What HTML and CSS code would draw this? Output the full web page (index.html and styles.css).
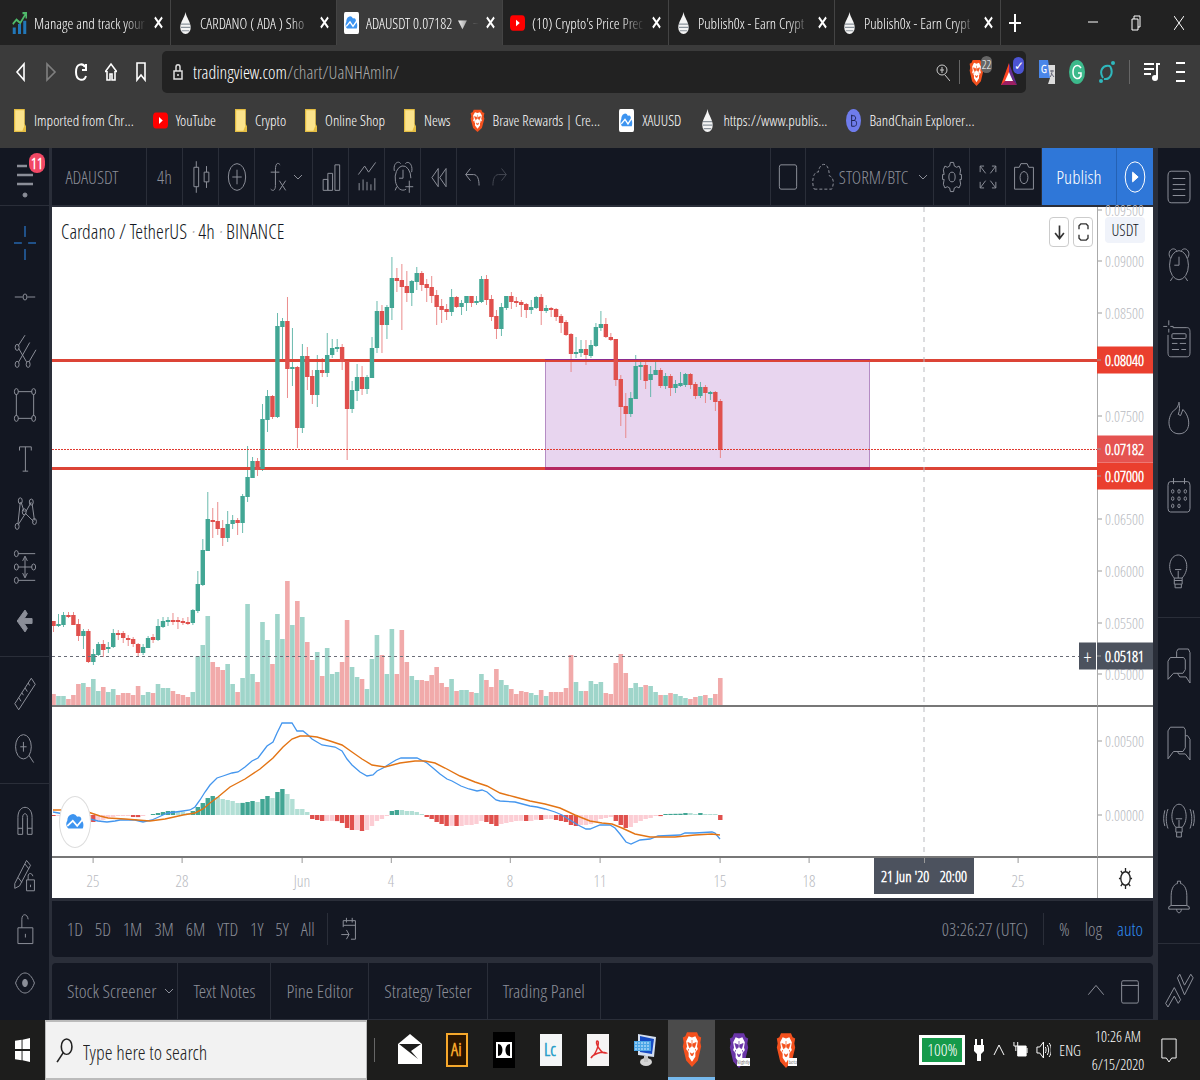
FILE: index.html
```
<!DOCTYPE html>
<html lang="en">
<head>
  <meta charset="UTF-8">
  <title>ADAUSDT 0.07182</title>
  <meta name="viewport" content="width=device-width, initial-scale=1">
  <link rel="stylesheet" href="styles.css">
</head>
<body>
  <!-- shared icons -->
  <svg class="defs" aria-hidden="true">
    <symbol id="drop" viewBox="0 0 20 20" preserveAspectRatio="none">
      <path d="M10 0C11 5 17 9 17 14a7 6 0 0 1-14 0C3 9 9 5 10 0z" fill="#f4f4f4"/>
      <path d="M4 11h12M4 14h13M5 17h10" stroke="#8a939b" stroke-width="1"/>
    </symbol>
    <symbol id="tv" viewBox="0 0 20 20" preserveAspectRatio="none">
      <rect width="20" height="20" rx="2" fill="#fff"/>
      <path d="M4 15a4 4 0 0 1-1-6 5 5 0 0 1 9-3c3-1 4 1 4 3 2 1 2 4 1 6z" fill="#3d94f0"/>
      <path d="M3 13l5-4 4 4 5-5" fill="none" stroke="#fff" stroke-width="1.5"/>
    </symbol>
    <symbol id="youtube" viewBox="0 0 20 20" preserveAspectRatio="none">
      <rect y="3" width="20" height="14" rx="4" fill="#f00"/>
      <path d="M8 7l5 3-5 3z" fill="#fff"/>
    </symbol>
    <symbol id="folder" viewBox="0 0 20 20" preserveAspectRatio="none">
      <path d="M0 0h18v13l2 2v5H0z" fill="#e4bd42"/>
      <path d="M2 1h15v14l-3 4H2z" fill="#fbe38c"/>
    </symbol>
    <symbol id="brave" viewBox="0 0 24 28" preserveAspectRatio="none">
      <path d="M6 1h12l2 3 3 1-1 4 1 3-4 11-7 5-7-5L1 12l1-3-1-4 3-1z" fill="var(--shield, #f4511e)"/>
      <path d="M12 5l4-1 3 4-1 4 1 2-3 3 0 3-4 4-4-4 0-3-3-3 1-2-1-4 3-4z" fill="#fff"/>
      <path d="M7 9l4 1 0 2-2 1zM17 9l-4 1 0 2 2 1zM10 17l2 1 2-1-1 2h-2zM8 14l-1 2M16 14l1 2M12 7v5" fill="var(--shield, #f4511e)" stroke="var(--shield, #f4511e)" stroke-width="0.7"/>
    </symbol>
  </svg>

  <div class="tabs">
    <a class="tab" href="#">
      <svg class="favicon" viewBox="0 0 20 20" preserveAspectRatio="none"><path d="M1 14h4v6H1zM8 11h4v9H8zM15 8h4v12h-4z" fill="#2277b8"/><path d="M1 11l5-4 5 3 7-8M14 1h5v5" fill="none" stroke="#4fb96a" stroke-width="2"/></svg>
      <span class="tab-title">Manage and track your</span><svg class="close" viewBox="0 0 10 10" preserveAspectRatio="none"><path d="M1 1l8 8M9 1L1 9"/></svg>
    </a>
    <a class="tab" href="#">
      <svg class="favicon"><use href="#drop"/></svg>
      <span class="tab-title">CARDANO ( ADA ) Sho</span><svg class="close" viewBox="0 0 10 10" preserveAspectRatio="none"><path d="M1 1l8 8M9 1L1 9"/></svg>
    </a>
    <a class="tab active" href="#">
      <svg class="favicon"><use href="#tv"/></svg>
      <span class="tab-title">ADAUSDT 0.07182 ▼ −</span><svg class="close" viewBox="0 0 10 10" preserveAspectRatio="none"><path d="M1 1l8 8M9 1L1 9"/></svg>
    </a>
    <a class="tab" href="#">
      <svg class="favicon"><use href="#youtube"/></svg>
      <span class="tab-title">(10) Crypto's Price Prec</span><svg class="close" viewBox="0 0 10 10" preserveAspectRatio="none"><path d="M1 1l8 8M9 1L1 9"/></svg>
    </a>
    <a class="tab" href="#">
      <svg class="favicon"><use href="#drop"/></svg>
      <span class="tab-title">Publish0x - Earn Crypt</span><svg class="close" viewBox="0 0 10 10" preserveAspectRatio="none"><path d="M1 1l8 8M9 1L1 9"/></svg>
    </a>
    <a class="tab" href="#">
      <svg class="favicon"><use href="#drop"/></svg>
      <span class="tab-title">Publish0x - Earn Crypt</span><svg class="close" viewBox="0 0 10 10" preserveAspectRatio="none"><path d="M1 1l8 8M9 1L1 9"/></svg>
    </a>
    <button class="new-tab" aria-label="New tab"><svg viewBox="0 0 12 20" preserveAspectRatio="none"><path d="M6 0v20M0 10h12" stroke="#fff" stroke-width="2"/></svg></button>
    <div class="window-controls">
      <button aria-label="Minimize"><svg viewBox="0 0 10 16"><path d="M0 7h10"/></svg></button>
      <button aria-label="Restore"><svg viewBox="0 0 10 16"><path d="M1 4h6v11H1zM3 4V1h6v11H7"/></svg></button>
      <button aria-label="Close"><svg viewBox="0 0 10 16"><path d="M0 1l10 14M10 1L0 15"/></svg></button>
    </div>
  </div>

  <div class="nav">
    <button aria-label="Back"><svg viewBox="0 0 12 20"><path d="M9 2v16L2 10z"/></svg></button>
    <button class="dim" aria-label="Forward"><svg viewBox="0 0 12 20"><path d="M2 2v16l8-8z"/></svg></button>
    <button aria-label="Reload"><svg viewBox="0 0 12 20"><path d="M10 5C8 1 1 1 1 10c0 9 8 10 10 4M11 2v6H7" stroke-width="2"/></svg></button>
    <button aria-label="Home"><svg viewBox="0 0 12 20"><path d="M0 10l6-8 6 8M2 9v9h3v-6h2v6h3V9"/></svg></button>
    <button aria-label="Bookmark"><svg viewBox="0 0 12 20"><path d="M2 1h8v17l-4-5-4 5z"/></svg></button>
    <div class="address">
      <svg viewBox="0 0 10 16"><path d="M1 7h8v8H1zM3 7V3c0-3 4-3 4 0v4M5 10v2"/></svg>
      <span class="host">tradingview.com</span><span class="path">/chart/UaNHAmIn/</span>
      <span class="address-icons">
        <svg class="zoom" viewBox="0 0 14 22"><circle cx="6" cy="9" r="5"/><path d="M9 14l5 6M6 6v6M4 9h4"/></svg>
        <i class="bar"></i>
        <span class="badged"><svg class="ext-brave"><use href="#brave"/></svg><b class="count">22</b></span>
        <span class="badged"><svg class="bat" viewBox="0 0 16 22" preserveAspectRatio="none"><path d="M8 0L0 22h4l4-11z" fill="#ff4724"/><path d="M0 22h16l-4-5H5z" fill="#9e1f63"/><path d="M8 0l8 22-4-5-4-7z" fill="#662d91"/><path d="M8 9l-4 9h8z" fill="#fff"/></svg><b class="count check">✓</b></span>
      </span>
    </div>
    <div class="extensions">
      <svg viewBox="0 0 16 24"><path d="M0 0h9l3 18H0z" fill="#4a86e8"/><path d="M9 5h7v19H9l2-6z" fill="#dcdcdc"/><path d="M11 11h4M13 10c0 4-1 6-2 7M12 13l3 4" stroke="#667" fill="none"/><text x="2" y="13" fill="#fff" font-size="11" font-weight="bold">G</text></svg>
      <svg viewBox="0 0 16 24" preserveAspectRatio="none"><ellipse cx="8" cy="12" rx="8" ry="12" fill="#3cb98b"/><path d="M12 8C9 3 4 6 4 12s5 9 8 4v-3H9" fill="none" stroke="#fff" stroke-width="1.5"/></svg>
      <svg viewBox="0 0 16 24"><g fill="none" stroke="#2fb8bd" stroke-width="2"><path d="M4 18C0 12 3 4 11 6M5 19c6 1 10-6 6-13"/></g><circle cx="14" cy="3" r="2" fill="#2fb8bd"/><circle cx="2" cy="21" r="2" fill="#2fb8bd"/></svg>
      <i class="bar"></i>
      <svg viewBox="0 0 16 20"><path d="M0 2h10M0 7h10M0 12h7M13 16V2h3" fill="none" stroke="#fff" stroke-width="2"/><ellipse cx="11" cy="16" rx="3" ry="3" fill="#fff"/></svg>
      <svg viewBox="0 0 16 20"><path d="M2 1h9M2 10h9M2 19h9" stroke="#fff" stroke-width="2"/></svg>
    </div>
  </div>

  <div class="bookmarks">
    <a href="#"><svg class="folder"><use href="#folder"/></svg>Imported from Chr...</a>
    <a href="#"><svg><use href="#youtube"/></svg>YouTube</a>
    <a href="#"><svg class="folder"><use href="#folder"/></svg>Crypto</a>
    <a href="#"><svg class="folder"><use href="#folder"/></svg>Online Shop</a>
    <a href="#"><svg class="folder"><use href="#folder"/></svg>News</a>
    <a href="#"><svg><use href="#brave"/></svg>Brave Rewards | Cre...</a>
    <a href="#"><svg><use href="#tv"/></svg>XAUUSD</a>
    <a href="#"><svg><use href="#drop"/></svg>https://www.publis...</a>
    <a href="#"><svg viewBox="0 0 16 24" preserveAspectRatio="none"><ellipse cx="8" cy="12" rx="8" ry="12" fill="#6f7cec"/><path d="M6 6v12h3c3 0 3-6 0-6H6M6 7h2c3 0 3 5 0 5" fill="none" stroke="#1c2150"/></svg>BandChain Explorer...</a>
  </div>

  <main class="workspace">
    <aside class="draw-tools">
      <button class="menu" aria-label="Menu"><svg viewBox="0 0 18 34"><path d="M1 2h10M1 11h16M1 20h16" stroke-width="2.5"/><circle cx="9" cy="31" r="2" fill="currentColor"/></svg><b>11</b></button>
      <div class="tool-group">
        <button class="on" aria-label="Cross"><svg class="ico" viewBox="0 0 28 28" preserveAspectRatio="none"><path d="M14 0v9M14 19v9M0 14h10M18 14h10"/></svg></button>
        <button aria-label="Trend line"><svg class="ico" viewBox="0 0 28 28" preserveAspectRatio="none"><path d="M1 14h10M17 14h10"/><circle cx="14" cy="14" r="2.5"/></svg></button>
        <button aria-label="Pitchfork"><svg class="ico" viewBox="0 0 28 28" preserveAspectRatio="none"><path d="M5 10l9-9M6 12l10 11M6 23L20 7M19 23l9-10"/><circle cx="4" cy="11" r="2.5"/><circle cx="4" cy="25" r="2.5"/><circle cx="18" cy="25" r="2.5"/></svg></button>
        <button aria-label="Rectangle"><svg class="ico" viewBox="0 0 28 28" preserveAspectRatio="none"><path d="M5 3h18M5 25h18M3 5v18M25 5v18"/><circle cx="3" cy="3" r="2.5"/><circle cx="25" cy="3" r="2.5"/><circle cx="3" cy="25" r="2.5"/><circle cx="25" cy="25" r="2.5"/></svg></button>
        <button aria-label="Text"><svg class="ico" viewBox="0 0 28 28" preserveAspectRatio="none"><path d="M7 7V4h15v3M14.500 4v20M11 24h7"/></svg></button>
        <button aria-label="Pattern"><svg class="ico" viewBox="0 0 28 28" preserveAspectRatio="none"><path d="M5 23L8 5M9 5l4 8M15 13l7-8M23 6l3 14M5 24l9-9M14 14l11 7"/><circle cx="4" cy="25" r="2.500"/><circle cx="8" cy="4" r="2.500"/><circle cx="13" cy="13" r="2.500"/><circle cx="22" cy="5" r="2.500"/><circle cx="26" cy="21" r="2.500"/></svg></button>
        <button aria-label="Forecast"><svg class="ico" viewBox="0 0 28 28" preserveAspectRatio="none"><path d="M5 3h22M5 14h18M5 25h22M14 6v16M11 9l3-4 3 4M11 19l3 4 3-4"/><circle cx="3" cy="3" r="2.500"/><circle cx="3" cy="14" r="2.500"/><circle cx="25" cy="14" r="2.500"/><circle cx="3" cy="25" r="2.500"/></svg></button>
        <button aria-label="Arrow"><svg class="ico" viewBox="0 0 28 28" preserveAspectRatio="none"><path d="M4 14l10-9 3 3-4 4h10v4H13l4 4-3 3z" fill="currentColor"/></svg></button>
      </div>
      <div class="tool-group">
        <button aria-label="Measure"><svg class="ico" viewBox="0 0 28 28" preserveAspectRatio="none"><path d="M1 22L22 1l5 5L6 27zM6 17l3 3M10 13l2 2M14 9l3 3M18 5l2 2"/></svg></button>
        <button aria-label="Zoom in"><svg class="ico" viewBox="0 0 28 28" preserveAspectRatio="none"><circle cx="12" cy="13" r="10"/><path d="M19 20l6 6M12 9v8M8 13h8"/></svg></button>
      </div>
      <div class="tool-group">
        <button aria-label="Magnet"><svg class="ico" viewBox="0 0 28 28" preserveAspectRatio="none"><path d="M5 25V11c0-11 18-11 18 0v14h-6V11c0-4-6-4-6 0v14zM5 20h6M17 20h6"/></svg></button>
        <button aria-label="Drawing mode"><svg class="ico" viewBox="0 0 28 28" preserveAspectRatio="none"><path d="M1 21L16 2l5 4L7 23l-6 2zM5 16l5 4M14 5l5 4M16 18h10v9H16zM18 18v-3c0-3 5-3 6 0M21 22v2"/></svg></button>
        <button aria-label="Lock drawings"><svg class="ico" viewBox="0 0 28 28" preserveAspectRatio="none"><path d="M5 13h19v13H5zM10 13V6c0-5 7-5 8 0M14.500 18v3"/></svg></button>
        <button aria-label="Hide drawings"><svg class="ico" viewBox="0 0 28 28" preserveAspectRatio="none"><path d="M2 14c6-11 18-11 24 0-6 11-18 11-24 0z"/><circle cx="14" cy="14" r="3" fill="currentColor"/></svg></button>
      </div>
    </aside>

    <section class="center">
      <header class="top-bar">
        <button class="symbol">ADAUSDT</button>
        <button>4h</button>
        <button aria-label="Candles"><svg class="ico" viewBox="0 0 28 28" preserveAspectRatio="none"><path d="M5 6h6v16H5zM8 1v5M8 22v5M18 10h6v8h-6zM21 5v5M21 18v5"/></svg></button>
        <button aria-label="Compare"><svg class="ico" viewBox="0 0 28 28" preserveAspectRatio="none"><circle cx="14" cy="14" r="11"/><path d="M14 8v12M8 14h12"/></svg></button>
        <button class="wide" aria-label="Indicators"><svg class="ico" viewBox="0 0 28 28" preserveAspectRatio="none"><path d="M18 4c-4-3-6 0-6 4v13c0 4-3 5-6 3M6 10h11M17 17l8 8M25 17l-8 8"/></svg><svg class="chev" viewBox="0 0 8 6"><path d="M0 1l4 4 4-4"/></svg></button>
        <button aria-label="Financials"><svg class="ico" viewBox="0 0 28 28" preserveAspectRatio="none"><path d="M4 16h6v9H4zM10 11h6v14h-6zM19 4h6v21h-6z"/></svg></button>
        <button aria-label="Templates"><svg class="ico" viewBox="0 0 28 28" preserveAspectRatio="none"><path d="M3 12l8-7 5 5 9-8M4 19v6M9 16v9M14 18v7M19 20v5M24 15v10"/></svg></button>
        <button aria-label="Alert"><svg class="ico" viewBox="0 0 28 28" preserveAspectRatio="none"><path d="M18 24A10 10 0 1 1 24 15M14 8v7H9M3 9c-2-6 5-9 8-6M17 3c4-3 10 1 8 7M6 22l-2 3M22 17v10M17 22h10"/></svg></button>
        <button aria-label="Replay"><svg class="ico" viewBox="0 0 28 28" preserveAspectRatio="none"><path d="M13 7v15l-8-7.500zM23 7v15l-8-7.500z"/></svg></button>
        <button class="wide" aria-label="Undo"><svg class="ico" viewBox="0 0 28 28" preserveAspectRatio="none"><path d="M12 7l-6 5 6 5M6 12h10c5 0 7 4 7 9"/></svg><svg class="ico faint" viewBox="0 0 28 28" preserveAspectRatio="none"><path d="M16 7l6 5-6 5M22 12H12c-5 0-7 4-7 9"/></svg></button>
        <span class="spacer"></span>
        <button aria-label="Layout"><svg class="ico" viewBox="0 0 28 28" preserveAspectRatio="none"><rect x="3" y="4" width="22" height="20" rx="2"/></svg></button>
        <button class="layout-name"><svg class="ico" viewBox="0 0 28 28" preserveAspectRatio="none"><path d="M3 24h22c4-5 2-10-3-11 0-12-12-12-14-3-7-1-9 10-5 14z" stroke-dasharray="3 2"/></svg>STORM/BTC<svg class="chev" viewBox="0 0 8 6"><path d="M0 1l4 4 4-4"/></svg></button>
        <button aria-label="Settings"><svg class="ico" viewBox="0 0 28 28" preserveAspectRatio="none"><path d="M12 2h4l1 3 3 1 3-1 2 3-1 4h2v4h-2l1 4-2 3-3-1-3 1-1 3h-4l-1-3-3-1-3 1-2-3 1-4H2v-4h2L3 8l2-3 3 1 3-1z"/><circle cx="14" cy="14" r="4"/></svg></button>
        <button aria-label="Fullscreen"><svg class="ico" viewBox="0 0 28 28" preserveAspectRatio="none"><path d="M4 10V5h5M4 5l7 6M19 5h5v5M24 5l-7 6M4 18v5h5M4 23l7-6M24 18v5h-5M24 23l-7-6"/></svg></button>
        <button aria-label="Snapshot"><svg class="ico" viewBox="0 0 28 28" preserveAspectRatio="none"><path d="M2 6h6l2-3h8l2 3h6v18H2z"/><circle cx="14" cy="14.500" r="5"/></svg></button>
        <button class="publish">Publish</button>
        <button class="publish play" aria-label="Stream"><svg class="ico" viewBox="0 0 28 28" preserveAspectRatio="none"><circle cx="14" cy="14" r="12.500"/><path d="M11 10l7 4-7 4z" fill="currentColor"/></svg></button>
      </header>

      <div class="chart">
        <div class="pane">
          <svg id="pricePlot" class="plot" viewBox="52 207 1045 498" preserveAspectRatio="none"></svg>
          <h1>Cardano / TetherUS <i>·</i> 4h <i>·</i> BINANCE</h1>
          <div class="pane-buttons">
            <button aria-label="Move down"><svg viewBox="0 0 10 16"><path d="M5 2v12M1 9l4 5 4-5"/></svg></button>
            <button aria-label="Maximize"><svg viewBox="0 0 12 20"><path d="M1 7V3l2-2h6l2 2v4M1 13v4l2 2h6l2-2v-4"/></svg></button>
          </div>
        </div>
        <div class="axis" id="priceAxis"><span class="currency">USDT</span></div>
        <div class="pane">
          <svg id="macdPlot" class="plot" viewBox="52 707 1045 149" preserveAspectRatio="none"></svg>
          <a class="logo" href="#" aria-label="TradingView"><svg><use href="#tv"/></svg></a>
        </div>
        <div class="axis" id="macdAxis"></div>
        <div class="time-axis" id="timeAxis"></div>
        <button class="axis-settings" aria-label="Axis settings"><svg viewBox="0 0 16 24" preserveAspectRatio="none"><ellipse cx="8" cy="12" rx="5" ry="7"/><path d="M8 1v4M8 19v4M1 12h2M13 12h2M3 4l2 3M11 17l2 3M13 4l-2 3M5 17l-2 3"/></svg></button>
      </div>

      <div class="ranges">
        <button>1D</button><button>5D</button><button>1M</button><button>3M</button><button>6M</button><button>YTD</button><button>1Y</button><button>5Y</button><button>All</button>
        <i class="sep"></i>
        <button aria-label="Go to date"><svg class="ico small" viewBox="0 0 28 28" preserveAspectRatio="none"><path d="M5 12V5h19v20h-7M5 10h19M10 2v5M19 2v5M2 20h12M10 15l4 5-4 5"/></svg></button>
        <span class="spacer"></span>
        <div class="scale">
          <span class="clock">03:26:27 (UTC)</span>
          <i class="sep"></i>
          <button>%</button><button>log</button><button class="on">auto</button>
        </div>
      </div>

      <footer class="panels">
        <button class="screener">Stock Screener<svg class="chev" viewBox="0 0 8 6"><path d="M0 1l4 4 4-4"/></svg></button>
        <button>Text Notes</button>
        <button>Pine Editor</button>
        <button>Strategy Tester</button>
        <button>Trading Panel</button>
        <span class="spacer"></span>
        <button class="plain" aria-label="Open panel"><svg class="ico small" viewBox="0 0 28 28" preserveAspectRatio="none"><path d="M2 18L14 8l12 10"/></svg></button>
        <button class="plain" aria-label="Maximize panel"><svg class="ico small" viewBox="0 0 28 28" preserveAspectRatio="none"><rect x="1" y="3" width="26" height="24" rx="2"/><path d="M1 8h26"/></svg></button>
      </footer>
    </section>

    <aside class="widgets">
      <div class="widget-group">
        <button aria-label="Watchlist"><svg class="ico" viewBox="0 0 28 28" preserveAspectRatio="none"><rect x="0" y="1" width="28" height="26" rx="4"/><path d="M6 7h16M6 12h16M6 16h16M6 21h16"/></svg></button>
        <button aria-label="Alerts"><svg class="ico" viewBox="0 0 28 28" preserveAspectRatio="none"><circle cx="14" cy="15" r="12"/><path d="M14 8v7H8M3 9c-5-5 3-10 8-6M25 9c5-5-3-10-8-6M6 25l-3 3M22 25l3 3"/></svg></button>
        <button aria-label="Data window"><svg class="ico" viewBox="0 0 28 28" preserveAspectRatio="none"><path d="M6 3h18c3 0 4 1 4 4v16c0 3-1 4-4 4H4c-3 0-4-1-4-4V9M1-3v4M1 4v3M-6 2h5M3 2h4"/><rect x="5" y="8" width="18" height="4" rx="1"/><path d="M5 16h7M15 16h8M5 21h9M17 21h6"/></svg></button>
        <button aria-label="Hotlists"><svg class="ico" viewBox="0 0 28 28" preserveAspectRatio="none"><path d="M14 1c1 4 1 7-1 10l3 1 3-5c11 7 10 20-5 20S-2 14 7 8c5-2 6-4 7-7z"/></svg></button>
        <button aria-label="Calendar"><svg class="ico" viewBox="0 0 28 28" preserveAspectRatio="none"><rect x="0" y="3" width="28" height="25" rx="3"/><path d="M7 0v5M21 0v5"/><circle cx="6" cy="11" r="1.500"/><circle cx="14" cy="11" r="1.500"/><circle cx="22" cy="11" r="1.500"/><circle cx="6" cy="17" r="1.500"/><circle cx="14" cy="17" r="1.500"/><circle cx="22" cy="17" r="1.500"/><circle cx="6" cy="23" r="1.500"/><circle cx="14" cy="23" r="1.500"/></svg></button>
        <button aria-label="Ideas"><svg class="ico" viewBox="0 0 28 28" preserveAspectRatio="none"><path d="M8 19c-11-8-5-19 5-19s16 11 5 19zM8 19v5h10v-5M9 24v3h8v-3M13 19v-6M9 12h8M8 21h10"/></svg></button>
      </div>
      <div class="widget-group">
        <button aria-label="Public chats"><svg class="ico" viewBox="0 0 28 28" preserveAspectRatio="none"><path d="M11 7V2l2-2h13l2 3v25l-5-5h-8l-3-3M0 10l3-3h17l2 2v8l-3 3H7l-7 5z"/></svg></button>
        <button aria-label="Private chats"><svg class="ico" viewBox="0 0 28 28" preserveAspectRatio="none"><path d="M0 4l3-3h17l2 2v15l-3 3H7l-7 6zM22 8h3l3 3v17l-6-5h-8l-2-2"/></svg></button>
        <button aria-label="Ideas stream"><svg class="ico" viewBox="0 0 28 28" preserveAspectRatio="none"><path d="M10 20C1 14 5 1 14 1s13 13 4 19zM10 20v4h8v-4M11 24v4h6v-4M14 20v-6M10 13h8M0 5c-3 5-3 11 0 16M-4 6c-2 5-2 9 0 13M28 5c3 5 3 11 0 16M32 6c2 5 2 9 0 13"/></svg></button>
        <button aria-label="Notifications"><svg class="ico" viewBox="0 0 28 28" preserveAspectRatio="none"><path d="M4 21v-8c0-7 5-10 8-10V1h4v2c3 0 8 3 8 10v8l3 1v2H1v-2zM4 21h20M11 24c0 4 6 4 6 0"/></svg></button>
      </div>
      <div class="widget-group last">
        <button aria-label="Order panel"><svg class="ico" viewBox="0 0 28 28" preserveAspectRatio="none"><path d="M-3 25l11-13 8 10-3 3-5-6-8 9zM12 4l3-3 6 9 8-9 3 3-11 14z"/></svg></button>
      </div>
    </aside>
  </main>

  <div class="taskbar">
    <button class="start" aria-label="Start"><svg viewBox="0 0 16 26" preserveAspectRatio="none"><path d="M0 3l7-1v10H0zM8 2l8-2v12H8zM0 14h7v10l-7-1zM8 14h8v12l-8-2z" fill="#fff"/></svg></button>
    <label class="search"><svg viewBox="0 0 16 26" preserveAspectRatio="none"><ellipse cx="10" cy="9" rx="5" ry="8"/><path d="M7 15L1 25"/></svg><input type="text" placeholder="Type here to search"></label>
    <i class="bar"></i>
    <div class="apps">
      <button aria-label="Mail"><svg viewBox="0 0 24 36" preserveAspectRatio="none"><path d="M0 12L12 2l12 10v20H0z" fill="#fff"/><path d="M1 12h22L13 19l7 8L1 12z" fill="#1d1d1c"/></svg></button>
      <button aria-label="Illustrator"><svg viewBox="0 0 24 36"><rect x="2" y="2" width="20" height="32" fill="#2a1500" stroke="#f7a82b" stroke-width="2"/><text x="6" y="24" font-size="18" font-weight="bold" fill="#f7a82b">Ai</text></svg></button>
      <button aria-label="Dolby"><svg viewBox="0 0 24 36"><path d="M1 0h22v36H1z" fill="#000"/><path d="M4 10h16v16H4z" fill="#fff"/><path d="M6 12c6 0 6 12 0 12zM18 12c-6 0-6 12 0 12z"/></svg></button>
      <button aria-label="LiveCycle"><svg viewBox="0 0 24 36"><path d="M1 2h22v32H1z" fill="#f4f6f7"/><text x="5" y="24" font-size="18" font-weight="bold" fill="#2d9fc9">Lc</text></svg></button>
      <button aria-label="Acrobat"><svg viewBox="0 0 24 36"><path d="M1 2h22v32H1z" fill="#f6f4f4"/><path d="M5 26c7-6 9-18 6-17-2 2 4 13 9 12-4-2-13 1-15 5z" fill="none" stroke="#e02f2f" stroke-width="1.500"/></svg></button>
      <button aria-label="Remote desktop"><svg viewBox="0 0 24 36"><path d="M5 2l18 3-2 20-16-2z" fill="#d4dff0"/><path d="M7 4l14 3-2 15-12-2z" fill="#164bc4"/><path d="M1 9h17v10H1z" fill="#4aa5e6"/><path d="M2 11h15M2 14h15M2 17h15" stroke="#d7efff" stroke-dasharray="2 1"/><ellipse cx="13" cy="30" rx="6" ry="4" fill="#d5d5d5"/><path d="M11 24h4v6h-4z" fill="#c4c4c4"/></svg></button>
      <button class="running" aria-label="Brave"><svg><use href="#brave"/></svg></button>
      <button class="nightly" aria-label="Brave Nightly"><svg><use href="#brave"/></svg><small>Nightly</small></button>
      <button aria-label="Brave Beta"><svg><use href="#brave"/></svg><small>beta</small></button>
    </div>
    <span class="spacer"></span>
    <div class="tray">
      <span class="battery">100%</span>
      <svg viewBox="0 0 12 24"><path d="M3 1v6M9 1v6" stroke-width="2"/><path d="M1 7h10v6l-3 3v7H4v-7l-3-3z" fill="#fff" stroke="none"/></svg>
      <svg viewBox="0 0 12 24"><path d="M1 17L6 7l5 10"/></svg>
      <svg class="power" viewBox="0 0 16 24" preserveAspectRatio="none"><path d="M5 8h9v10H5z" fill="#fff"/><path d="M1 4v4h4V4M3 8v5M15 10v5"/></svg>
      <svg class="power" viewBox="0 0 16 24" preserveAspectRatio="none"><path d="M1 9h3l4-5v16l-4-5H1zM10 9c1 2 1 4 0 6M12 7c2 3 2 7 0 10M14 5c3 4 3 10 0 14"/></svg>
      <span>ENG</span>
      <time>10:26 AM<br>6/15/2020</time>
      <svg class="note" viewBox="0 0 18 28" preserveAspectRatio="none"><path d="M1 3h16v19h-5l-3 4-3-4H1z"/></svg>
    </div>
  </div>

  <script src="chart.js"></script>
</body>
</html>
```
FILE: chart.js
```
// [up, bodyTop, bodyBottom, high, low, volumeTop]
const bars = [
  [0,621,626,621,632,694],[1,624,626,614,627,696],[1,615,625,612,627,696],[0,615,616,612,618,699],[0,615,625,612,625,695],
  [0,624,636,619,641,684],[1,631,636,629,649,683],[0,631,662,629,663,687],[1,654,662,649,665,679],[1,644,655,642,656,691],
  [0,644,650,640,657,687],[1,647,649,642,653,692],[1,633,647,629,648,689],[0,633,635,630,640,695],[0,633,638,631,643,693],
  [0,638,640,635,646,693],[0,639,644,637,647,695],[0,644,653,643,656,686],[1,647,653,644,655,695],[1,638,648,636,648,692],
  [0,637,640,634,643,693],[1,626,640,619,641,684],[1,621,627,617,628,688],[1,620,622,617,626,688],[0,620,621,613,625,691],
  [0,620,622,617,629,694],[0,621,623,618,625,695],[0,622,623,617,625,697],[1,610,623,609,625,692],[1,584,611,571,613,656],
  [1,550,585,539,586,645],[1,519,551,492,551,616],[0,520,522,508,538,662],[0,521,529,502,535,667],[0,528,538,520,546,670],
  [1,524,538,511,542,664],[1,520,524,515,529,684],[0,520,523,518,535,692],[1,496,523,494,533,678],[1,477,497,446,502,604],
  [1,461,478,457,478,674],[0,461,470,458,476,682],[1,419,469,404,471,622],[1,396,420,390,432,640],[0,396,417,395,419,664],
  [1,326,417,313,418,614],[1,321,327,318,359,639],[0,321,369,297,398,581],[1,367,369,328,386,625],[0,367,428,366,448,601],
  [1,356,428,344,433,617],[0,356,377,347,390,642],[0,376,395,370,404,660],[1,370,395,355,407,652],[0,370,373,358,377,676],
  [1,355,373,333,377,648],[1,348,355,339,358,674],[1,347,349,339,352,672],[0,347,362,344,370,662],[0,361,409,360,460,620],
  [1,390,409,381,413,667],[1,377,391,364,401,677],[0,377,389,366,395,679],[1,377,389,375,394,689],[1,348,378,337,378,659],
  [1,311,348,301,353,635],[0,311,325,305,353,655],[1,307,325,305,339,674],[1,278,308,257,320,629],[0,278,281,268,292,674],
  [0,280,287,264,330,630],[0,286,293,271,302,662],[1,281,293,280,306,676],[1,273,282,267,290,680],[0,273,285,271,291,680],
  [0,284,288,279,302,681],[0,287,296,276,303,675],[0,295,307,290,325,667],[0,306,310,299,323,683],[0,309,312,304,320,687],
  [1,297,312,289,316,679],[0,297,307,296,308,691],[1,303,307,300,315,690],[1,296,303,296,311,690],[0,296,303,296,307,692],
  [1,301,303,296,305,693],[1,279,302,276,303,674],[0,279,300,275,305,680],[0,299,317,295,321,687],[0,316,329,310,339,669],
  [1,307,329,303,336,680],[1,296,308,296,310,685],[0,296,302,292,309,689],[0,301,303,297,307,694],[0,302,305,300,317,691],
  [0,304,310,303,318,692],[1,307,310,300,314,693],[1,297,308,296,309,695],[0,297,311,294,325,690],[1,308,311,305,313,696],
  [0,308,310,307,317,692],[0,309,317,308,321,692],[0,316,323,314,333,692],[0,322,335,320,336,688],[0,334,354,333,372,655],
  [1,352,354,337,358,682],[1,349,353,340,357,691],[0,349,355,340,365,691],[1,345,356,340,358,681],[1,327,346,323,347,684],
  [1,324,328,311,331,682],[0,324,337,318,338,693],[0,337,340,333,341,694],[0,339,380,339,386,663],[0,379,407,375,426,654],
  [0,406,414,393,438,673],[1,398,414,392,417,688],[1,366,399,355,399,683],[1,365,367,360,380,687],[0,365,381,361,389,685],
  [1,374,380,366,397,686],[1,370,375,361,375,692],[0,370,386,368,388,695],[1,376,386,373,389,695],[0,376,388,374,396,693],
  [1,384,388,380,393,694],[1,383,386,372,387,696],[1,374,385,373,387,698],[0,374,385,373,389,699],[0,384,396,382,399,697],
  [1,387,396,382,398,696],[0,387,393,385,403,695],[1,392,393,391,400,698],[0,392,402,391,411,694],[0,401,450,399,458,678]
];

// MACD histogram, positive above the zero line
const hist = [
  -1,-1,-1,-2,-3,-4,-5,-6,-7,-6,-5,-3,-2,-1,-1,-1,-2,-2.1,-1,0,
  1,2,3,4,4.1,3,3,2,4,8,12,17,19,18,16,15,14,12,12.1,13,
  14,13,16,19,17,23,26,21,16,6,6,3,-4,-5,-6,-6,-5.9,-6.1,-8,-13,
  -15,-15,-16,-15,-11,-6,-4,-1,4,5,5,4,4,3,1,-2,-4,-7,-9,-11,
  -10.8,-11,-11,-10,-10,-9,-6,-7,-9,-11,-9,-8,-7,-6,-5.8,-6,-6,-4.8,-5,-4,
  -4,-5,-6,-7,-10,-11,-10,-10,-9,-7,-4,-3,-2,-6,-10,-13,-12,-8,-6,-4,
  -3,-1,-1.1,1,1.1,1.2,1.3,2,2,1,2,1,1,1,-5
];

const macdLine = "53,812 75,816 90,819 98,821 107,822 115,821 120,820 135,820 143,822 152,820 163,815 168,813 183,811 190,810 195,807 200,800 205,792 210,785 217,778 223,776 232,773 238,772 245,767 252,761 258,758 267,746 273,742 277,733 282,723 292,723 297,731 303,731 308,735 312,739 322,745 335,747 342,751 347,759 352,765 360,772 367,776 373,775 377,771 383,768 391,763 396,760 401,758 417,758 427,763 433,768 440,774 447,779 452,781 461,786 469,789 477,791 482,790 487,792 496,800 500,801 515,802 530,806 537,807 545,809 555,812 562,815 570,820 578,825 586,829 590,829 600,825 610,825 615,828 620,834 626,842 631,844 640,840 650,839 658,836 680,835 685,833 695,833 712,832 715,833 720,839";
const signalLine = "53,810 62,810 88,812 100,816 108,818 125,819 150,821 165,819 183,815 195,813 203,809 210,803 218,797 230,787 245,779 260,769 273,758 283,747 292,739 300,736 308,736 317,737 330,741 342,745 352,752 362,759 372,765 385,767 400,763 415,761 425,761 435,763 445,768 460,776 475,782 487,786 500,793 515,797 530,801 545,804 560,808 575,815 590,821 602,823 612,824 622,828 635,834 650,837 675,837 695,835 712,834 720,835";

const LEFT = 52, WIDTH = 1045;
const STEP = 4.976;
const barX = i => 53.5 + i * STEP;
const rect = (x, y, w, h, fill) => `<rect x="${x}" y="${y}" width="${w}" height="${h}" fill="${fill}"/>`;

function drawPrice() {
  let out = "";
  bars.forEach((b, i) => {
    out += rect(barX(i) - 2.3, b[5], 4.6, 705 - b[5], b[0] ? "#9fd5ca" : "#f1aaaa");
  });
  // range box
  out += `<rect x="545.5" y="360" width="324" height="108" fill="#e8d5ef" stroke="#b58cc4"/>`;
  bars.forEach((b, i) => {
    out += rect(barX(i) - 0.4, b[3], 0.9, b[4] - b[3], b[0] ? "#5bb3a5" : "#e88080");
  });
  out += rect(52, 359, 1045, 3, "#dc4436") + rect(52, 467, 1045, 3, "#dc4436");
  out += rect(545, 359, 325, 1, "#8a2b90") + rect(545, 467, 325, 3, "#b52860");
  bars.forEach((b, i) => {
    out += rect(barX(i) - 2.2, b[1], 4.4, Math.max(b[2] - b[1], 2), b[0] ? "#42a694" : "#e0504d");
  });
  out += `<path d="M52 449.500H1097" stroke="#e03a30" stroke-dasharray="2 1"/>`;
  out += `<path d="M52 656.500H1080" stroke="#6a6d78" stroke-dasharray="3 3"/>`;
  out += `<path d="M924 207V705" stroke="#b9babf" stroke-dasharray="5 5"/>`;
  document.getElementById("pricePlot").innerHTML = out;
}

function drawMacd() {
  let out = "";
  hist.forEach((h, i) => {
    const prev = i ? hist[i - 1] : 0;
    let fill;
    if (h >= 0) fill = h > prev ? "#42a694" : "#b2dfd5";
    else fill = h < prev ? "#e0504d" : "#fccdd4";
    out += rect(barX(i) - 2.2, h > 0 ? 815 - h : 815, 4.4, Math.abs(h), fill);
  });
  out += `<polyline points="${macdLine}" fill="none" stroke="#4496ee" stroke-width="1.3"/>`;
  out += `<polyline points="${signalLine}" fill="none" stroke="#e37414" stroke-width="1.4"/>`;
  out += `<path d="M924 707V856" stroke="#b9babf" stroke-dasharray="5 5"/>`;
  document.getElementById("macdPlot").innerHTML = out;
}

function addLabels(id, labels, top, height) {
  const axis = document.getElementById(id);
  labels.forEach(([text, y, cls]) => {
    const el = document.createElement("span");
    el.className = "price " + (cls || "");
    el.textContent = text;
    el.style.top = (y - top) / height * 100 + "%";
    axis.appendChild(el);
  });
}

function drawTimeAxis() {
  const axis = document.getElementById("timeAxis");
  const labels = [["25",93],["28",182],["Jun",302],["4",391],["8",510],["11",600],["15",720],["18",809],["25",1018],["21 Jun '20\u00a0\u00a0 20:00",924,"cursor"]];
  labels.forEach(([text, x, cls]) => {
    const el = document.createElement("span");
    el.className = "date " + (cls || "");
    el.textContent = text;
    el.style.left = (x - LEFT) / WIDTH * 100 + "%";
    axis.appendChild(el);
  });
}

drawPrice();
drawMacd();
addLabels("priceAxis", [
  ["0.09500",210],["0.09000",261],["0.08500",313],["0.07500",416],["0.06500",519],["0.06000",571],["0.05500",623],["0.05000",674],
  ["0.08040",360,"line"],["0.07000",476,"line"],["0.07182",449,"last"],["0.05181",656,"cursor"]
], 207, 498);
addLabels("macdAxis", [["0.00500",741],["0.00000",815]], 707, 149);
drawTimeAxis();
```
FILE: styles.css
```
* {
  box-sizing: border-box;
}
:root {
  --panel: #131722;
  --gap: #2a2e39;
  --muted: #8b8e98;
}
body {
  margin: 0;
  min-height: 100vh;
  display: flex;
  flex-direction: column;
  font-family: "Open Sans Condensed Light", "Open Sans Condensed", "Open Sans", sans-serif;
  font-size: 15px;
  color: #fff;
  background: #3b3b3b;
}
a {
  color: inherit;
  text-decoration: none;
}
button {
  display: flex;
  align-items: center;
  justify-content: center;
  padding: 0;
  border: 0;
  background: none;
  color: inherit;
  font: inherit;
  cursor: pointer;
}
svg {
  display: block;
  flex: none;
}
.defs {
  display: none;
}
.spacer {
  flex: 1;
}
.bar {
  width: 1px;
  height: 24px;
  background: #666;
}

/* tab strip */
.tabs {
  display: flex;
  height: 45px;
  padding-left: 5px;
  background: #222;
}
.tab {
  display: flex;
  align-items: center;
  gap: 7px;
  width: 166px;
  padding: 0 7px;
  border-right: 1px solid #444;
}
.tab.active {
  background: #3b3b3b;
}
.favicon {
  width: 15px;
  height: 22px;
}
.tab-title {
  flex: 1;
  white-space: nowrap;
  -webkit-mask-image: linear-gradient(to right, #000 80%, transparent);
  mask-image: linear-gradient(to right, #000 80%, transparent);
}
.close {
  width: 9px;
  height: 13px;
  fill: none;
  stroke: #fff;
  stroke-width: 2;
}
.new-tab {
  width: 28px;
}
.new-tab svg {
  width: 12px;
  height: 18px;
}
.window-controls {
  display: flex;
  margin-left: auto;
}
.window-controls button {
  width: 43px;
}
.window-controls svg {
  width: 10px;
  height: 16px;
  fill: none;
  stroke: #fff;
}

/* address bar */
.nav {
  display: flex;
  align-items: center;
  height: 54px;
  padding-left: 6px;
}
.nav button {
  width: 30px;
  height: 42px;
}
.nav button svg {
  width: 12px;
  height: 20px;
  fill: none;
  stroke: #fff;
  stroke-width: 1.6;
}
.nav .dim {
  opacity: 0.35;
}
.address {
  flex: 1;
  display: flex;
  align-items: center;
  height: 42px;
  margin-left: 6px;
  padding: 0 2px 0 11px;
  border-radius: 5px;
  background: #222;
  font-size: 18px;
}
.address > svg {
  width: 10px;
  height: 18px;
  margin-right: 10px;
  fill: none;
  stroke: #ddd;
  stroke-width: 1.5;
}
.path {
  color: #aaa;
}
.address-icons {
  display: flex;
  align-items: center;
  gap: 9px;
  margin-left: auto;
}
.zoom {
  width: 14px;
  height: 22px;
  fill: none;
  stroke: #ccc;
}
.badged {
  position: relative;
  width: 23px;
}
.ext-brave {
  width: 15px;
  height: 27px;
}
.bat {
  width: 16px;
  height: 22px;
  margin-top: 3px;
}
.count {
  position: absolute;
  top: -3px;
  right: 0;
  min-width: 11px;
  border-radius: 9px;
  background: #666;
  font-size: 12px;
  font-weight: normal;
  line-height: 17px;
  text-align: center;
}
.count.check {
  background: #4c54d2;
}
.extensions {
  display: flex;
  align-items: center;
  gap: 14px;
  width: 174px;
  padding-left: 13px;
}
.extensions svg {
  width: 16px;
  height: 24px;
}

/* bookmarks */
.bookmarks {
  display: flex;
  align-items: center;
  gap: 19px;
  height: 49px;
  padding: 0 14px 7px;
  white-space: nowrap;
}
.bookmarks a {
  display: flex;
  align-items: center;
  gap: 8px;
}
.bookmarks svg {
  width: 15px;
  height: 23px;
}
.bookmarks .folder {
  width: 12px;
}

/* tradingview */
.workspace {
  flex: 1;
  display: grid;
  grid-template-columns: 49px 1fr 42px;
  background: var(--gap);
  color: var(--muted);
  font-size: 18px;
}
.ico {
  width: 22px;
  height: 34px;
  overflow: visible;
  fill: none;
  stroke: currentColor;
}
.ico.small {
  width: 18px;
  height: 26px;
}
.ico * {
  vector-effect: non-scaling-stroke;
}
.ico.faint {
  opacity: 0.4;
}
.chev {
  width: 8px;
  height: 6px;
  fill: none;
  stroke: currentColor;
}
.draw-tools, .widgets {
  background: var(--panel);
}
.draw-tools button {
  width: 49px;
  height: 54px;
}
.draw-tools .menu {
  position: relative;
  height: 58px;
  border-bottom: 1px solid var(--gap);
}
.menu svg {
  width: 18px;
  height: 34px;
  margin-top: 8px;
  fill: none;
  stroke: currentColor;
}
.menu b {
  position: absolute;
  top: 5px;
  right: 4px;
  width: 16px;
  border-radius: 10px;
  background: #f24865;
  color: #fff;
  font-size: 15px;
  line-height: 20px;
}
.tool-group {
  padding: 10px 0 8px;
}
.tool-group + .tool-group {
  border-top: 1px solid var(--gap);
}
.draw-tools .on, .ranges .on {
  color: #2f8cf0;
}

.center {
  display: flex;
  flex-direction: column;
  min-width: 0;
  padding: 0 5px 1px 3px;
}
.top-bar {
  display: flex;
  height: 57px;
  margin-bottom: 2px;
  background: var(--panel);
}
.top-bar button {
  width: 36px;
  border-right: 1px solid var(--gap);
}
.top-bar .symbol {
  width: 95px;
  padding-right: 14px;
}
.top-bar .wide {
  width: 58px;
  gap: 6px;
}
.spacer + button {
  border-left: 1px solid var(--gap);
}
.top-bar .layout-name {
  width: 128px;
  gap: 5px;
}
.layout-name .chev {
  margin-left: 6px;
}
.top-bar .publish {
  width: 75px;
  border-color: #2461b4;
  background: #2f77d8;
  color: #fff;
  font-size: 19px;
}
.top-bar .play {
  width: 36px;
  border: 0;
}

.chart {
  flex: 1;
  display: grid;
  grid-template-columns: 1fr 56px;
  grid-template-rows: 500fr 151fr 40px;
  background: #fff;
  color: #131722;
}
.pane, .axis {
  position: relative;
  min-height: 0;
  border-bottom: 2px solid #777;
}
.axis, .axis-settings {
  border-left: 1px solid #aaa;
}
.plot {
  width: 100%;
  height: 100%;
}
.chart h1 {
  position: absolute;
  top: 14px;
  left: 9px;
  margin: 0;
  font-size: 20px;
  font-weight: normal;
  line-height: 22px;
}
.chart h1 i {
  color: #aaa;
}
.pane-buttons {
  position: absolute;
  top: 10px;
  right: 4px;
  display: flex;
  gap: 4px;
}
.pane-buttons button {
  width: 20px;
  height: 30px;
  border: 1px solid #ccc;
  border-radius: 4px;
  background: #fff;
}
.pane-buttons svg {
  width: 11px;
  height: 18px;
  fill: none;
  stroke: #333;
  stroke-width: 1.5;
}
.currency {
  position: absolute;
  z-index: 1;
  top: 10px;
  left: 7px;
  width: 40px;
  border-radius: 4px;
  background: #f0f3fa;
  font-size: 16px;
  line-height: 26px;
  text-align: center;
}
/* axis labels sit on their value */
.price {
  position: absolute;
  left: 0;
  width: 55px;
  padding-left: 7px;
  color: #b9bbc1;
  font-size: 15px;
  line-height: 27px;
  transform: translateY(-50%);
}
.price::before {
  content: "";
  position: absolute;
  top: 13px;
  left: 0;
  width: 4px;
  height: 1px;
  background: #999;
}
.price.line, .price.last, .price.cursor {
  left: -1px;
  width: 56px;
  padding-left: 8px;
  background: #ea3f2e;
  color: #fff;
  font-weight: bold;
}
.price.last {
  background: #e55350;
}
.price.cursor {
  background: #4c525e;
}
.price.cursor::after {
  content: "+";
  position: absolute;
  top: 0;
  left: -18px;
  width: 17px;
  background: #4c525e;
  font-size: 20px;
  font-weight: normal;
  text-align: center;
}
.logo {
  position: absolute;
  bottom: 8px;
  left: 7px;
  padding: 12px 4px;
  border: 1px solid #ddd;
  border-radius: 50%;
  background: #fff;
}
.logo svg {
  width: 22px;
  height: 26px;
}
.time-axis {
  position: relative;
}
.date {
  position: absolute;
  top: 0;
  padding-top: 10px;
  color: #b9bbc1;
  font-size: 16px;
  line-height: 26px;
  white-space: nowrap;
  transform: translateX(-50%);
}
.date::before {
  content: "";
  position: absolute;
  top: 0;
  left: 50%;
  width: 1px;
  height: 5px;
  background: #999;
}
.date.cursor {
  width: 100px;
  padding: 5px 0;
  background: #4c525e;
  color: #fff;
  font-size: 15px;
  font-weight: bold;
  text-align: center;
}
.axis-settings svg {
  width: 15px;
  height: 23px;
  fill: none;
  stroke: #222;
  stroke-width: 1.4;
}

.ranges {
  display: flex;
  align-items: center;
  gap: 12px;
  height: 56px;
  margin-top: 3px;
  padding: 0 10px 0 15px;
  border-radius: 0 0 4px 4px;
  background: var(--panel);
}
.scale {
  display: flex;
  align-items: center;
  gap: 15px;
}
.sep {
  width: 1px;
  height: 32px;
  background: var(--gap);
}
.panels {
  display: flex;
  height: 56px;
  margin-top: 6px;
  border-radius: 4px 4px 0 0;
  background: var(--panel);
  font-size: 19px;
}
.panels button {
  gap: 9px;
  padding: 0 15px;
  border-right: 1px solid var(--gap);
}
.panels .screener {
  padding-right: 4px;
}
.panels .plain {
  padding: 0 8px;
  border: 0;
}
.panels .plain:last-child {
  padding-right: 14px;
}

.widgets button {
  width: 42px;
  height: 77px;
}
.widget-group {
  padding-bottom: 7px;
}
.widget-group + .widget-group {
  padding: 9px 0 8px;
  border-top: 1px solid var(--gap);
}
.widget-group + .last {
  padding: 16px 0 0;
}
.last button {
  height: 60px;
}

/* windows taskbar */
.taskbar {
  display: flex;
  align-items: center;
  height: 60px;
  background: #1d1d1c;
}
.start {
  width: 45px;
}
.start svg {
  width: 15px;
  height: 24px;
}
.search {
  display: flex;
  align-items: center;
  gap: 10px;
  width: 322px;
  height: 60px;
  margin-right: 7px;
  padding: 0 10px;
  border: 1px solid #bbb;
  border-width: 2px 1px;
  background: #f2f2f2;
}
.search svg {
  width: 17px;
  height: 25px;
  fill: none;
  stroke: #222;
  stroke-width: 1.5;
}
.search input {
  flex: 1;
  min-width: 0;
  padding: 4px 0 0;
  border: 0;
  outline: 0;
  background: none;
  font: inherit;
  font-size: 20px;
}
.search input::placeholder {
  color: #222;
}
.apps {
  display: flex;
  height: 60px;
  margin-left: 11px;
}
.apps button {
  position: relative;
  width: 47px;
}
.apps svg {
  width: 24px;
  height: 36px;
}
.apps svg:has(use) {
  width: 20px;
}
.apps .running {
  border-bottom: 3px solid #76b9ed;
  background: #4b4b4b;
}
.nightly {
  --shield: #6a35a8;
}
.apps small {
  position: absolute;
  right: 12px;
  bottom: 14px;
  background: #fff;
  color: #333;
  font-size: 6px;
  line-height: 8px;
}
.tray {
  display: flex;
  align-items: center;
  gap: 8px;
  padding-right: 23px;
}
.tray svg {
  width: 12px;
  height: 24px;
  fill: none;
  stroke: #fff;
}
.tray .power {
  width: 15px;
}
.battery {
  width: 46px;
  border: 3px solid #fff;
  background: #169a4b;
  font-size: 17px;
  line-height: 24px;
  text-align: center;
}
.tray time {
  width: 58px;
  line-height: 28px;
  text-align: center;
  white-space: nowrap;
}
.tray .note {
  width: 16px;
  height: 28px;
  margin-left: 6px;
}
```
